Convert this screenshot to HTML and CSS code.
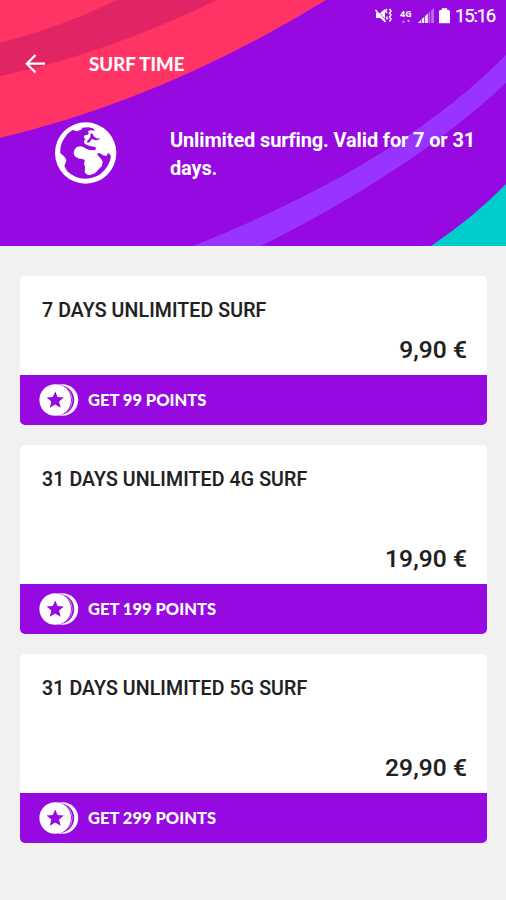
FILE: index.html
```html
<!DOCTYPE html>
<html lang="en">
<head>
<meta charset="utf-8">
<title>Surf Time</title>
<link rel="stylesheet" href="styles.css">
</head>
<body>
<svg class="defs" width="0" height="0" aria-hidden="true">
  <symbol id="coin" viewBox="0 0 40 34">
    <circle cx="23.400" cy="17" r="15.800" fill="#fff"/>
    <circle cx="20.400" cy="17" r="14.800" fill="#9609e0"/>
    <circle cx="18.500" cy="17" r="14.900" fill="#fff"/>
    <circle cx="17.300" cy="17" r="15.600" fill="#9609e0"/>
    <circle cx="16.200" cy="17" r="15.800" fill="#fff"/>
    <path d="M16.200 8.400l2.400 5.700 6.200.5-4.700 4 1.500 6.100-5.400-3.300-5.400 3.300 1.500-6.100-4.700-4 6.200-.5Z" fill="#9609e0"/>
  </symbol>
</svg>
<header class="hero">
  <svg class="hero-art" viewBox="0 0 506 246" aria-hidden="true">
    <path d="M0 0H326Q165 99 0 138Z" fill="#ff3364"/>
    <path d="M0 43Q62 27 117 0H217Q105 54 0 76Z" fill="#e12463"/>
    <path d="M193 246C315 197 425 137 506 55V83C440 145 353 200 261 246Z" fill="#9933ff"/>
    <path d="M431 246Q474 217 506 184V246Z" fill="#00cccc"/>
  </svg>
  <div class="status">
    <svg class="sound" viewBox="0 0 18 18" aria-hidden="true">
      <path d="M2 6h4l5-4v13l-5-4H2Z" fill="#fff"/>
      <path d="M2.500 2l10 12" stroke="#9609e0" stroke-width=".7"/>
      <path d="M1.500 3l10 12M13 2l-1.500 2L13 6M15.500 2L17 4l-1.500 2L17 8l-1.500 2 1.500 2-1.500 2.500M13 9.500v3" fill="none" stroke="#fff" stroke-width="1.500"/>
    </svg>
    <div class="network">
      <span>4G</span>
      <svg viewBox="0 0 10 5" aria-hidden="true"><path d="M1 3.500L2.500 1 4 3.500ZM6 1h3L7.500 3.500Z" fill="#d3a2f3"/></svg>
    </div>
    <svg class="signal" viewBox="0 0 16 16" aria-hidden="true">
      <path d="M0 15l3-3v3ZM3.700 11.300L6.300 8.700V15H3.700ZM7.200 8L9.800 5.500V15H7.200Z" fill="#fff"/>
      <path d="M10.500 4.800l1.700-1.700V15H10.500ZM13.200 2.500L16 0v15h-2.800Z" fill="#bd69ed"/>
    </svg>
    <svg class="battery" viewBox="0 0 12 17" aria-hidden="true"><path d="M3 0h6v2h1.500Q12 2 12 4v11.500q0 1-1 1H1q-1 0-1-1V4q0-2 1.500-2H3Z" fill="#fff"/></svg>
    <span class="clock">15:16</span>
  </div>
  <div class="toolbar">
    <svg class="back" viewBox="0 0 21 20" aria-hidden="true"><path d="M10.500 1L1.800 9.700l8.700 8.800M2 9.700h18" fill="none" stroke="#fff" stroke-width="2.200"/></svg>
    <h1>SURF TIME</h1>
  </div>
  <div class="intro">
    <svg class="globe" viewBox="6 6 189 189" aria-hidden="true">
      <circle cx="101" cy="99" r="92" fill="#fff"/>
      <path d="M108 22L123 25L129 32L116 31L107 34L111 39L106 45L98 46L95 52L100 57L96 64L98 71L106 76L118 79L130 81Q134 88 128 91L113 90L102 86L94 81L85 79L74 81Q65 89 65 100Q67 113 82 116L93 117L99 122L96 130L99 141L98 157Q103 168 117 164L130 159L140 148L150 138L152 124L147 116L137 106Q134 98 142 99L153 106L163 108L168 100Q173 98 174 105L177 108Q173 132 158 150Q136 176 101 176Q68 176 45 153L37 138L43 122L40 114L35 108L25 100Q23 75 36 56Q45 40 61 30L76 34L89 28L91 23Z" fill="#9609e0"/>
      <path d="M116 40L123 42L125 49L135 56L145 53Q141 61 131 61L119 57L114 65L107 69L105 64L112 56L115 51Z" fill="#9609e0"/>
    </svg>
    <p>Unlimited surfing. Valid for 7 or 31<br>days.</p>
  </div>
</header>
<main class="offers">
  <article class="card">
    <div class="details short"><h2>7 DAYS UNLIMITED SURF</h2><div class="price">9,90 €</div></div>
    <div class="points"><svg class="coin"><use href="#coin"/></svg><span class="points-label">GET 99 POINTS</span></div>
  </article>
  <article class="card">
    <div class="details"><h2>31 DAYS UNLIMITED 4G SURF</h2><div class="price">19,90 €</div></div>
    <div class="points"><svg class="coin"><use href="#coin"/></svg><span class="points-label">GET 199 POINTS</span></div>
  </article>
  <article class="card">
    <div class="details"><h2>31 DAYS UNLIMITED 5G SURF</h2><div class="price">29,90 €</div></div>
    <div class="points"><svg class="coin"><use href="#coin"/></svg><span class="points-label">GET 299 POINTS</span></div>
  </article>
</main>
</body>
</html>
```
FILE: styles.css
```css
* { box-sizing: border-box; }
body { margin: 0; min-height: 900px; background: #f1f1f1; font-family: Roboto, sans-serif; color: #202020; }
h1, h2, p { margin: 0; }
svg { display: block; flex: none; }
.defs { position: absolute; }
.hero { position: relative; height: 246px; background: #9609e0; color: #fff; overflow: hidden; }
.hero-art { position: absolute; inset: 0; width: 506px; height: 246px; }
.status, .toolbar, .intro { position: relative; display: flex; }
.status { height: 32px; align-items: center; justify-content: flex-end; padding-right: 10px; }
.sound { width: 18px; height: 18px; }
.network { width: 13px; margin-left: 8px; font: bold 9px/9px "Open Sans", sans-serif; }
.network span { display: block; height: 9px; }
.network svg { width: 10px; height: 5px; margin: 1px 0 0 1px; }
.signal { width: 16px; height: 16px; margin-left: 5px; }
.battery { width: 11px; height: 16px; margin-left: 5px; }
.clock { width: 41px; margin-left: 5px; font-size: 18.5px; line-height: 22px; letter-spacing: -1.2px; white-space: nowrap; -webkit-text-stroke: .25px #fff; }
.toolbar { height: 64px; align-items: center; padding-left: 25px; }
.back { width: 21px; height: 20px; }
h1 { margin-left: 43px; font: bold 18.7px/24px Lato, sans-serif; -webkit-text-stroke: .2px #fff; }
.intro { padding: 26px 0 0 54px; }
.globe { width: 63px; height: 63px; }
.intro p { margin: 4px 0 0 53px; font-weight: 700; font-size: 20px; line-height: 28px; letter-spacing: -.14px; white-space: nowrap; }
.offers { display: flex; flex-direction: column; gap: 20px; padding: 30px 19px 0 20px; }
.card { border-radius: 5px; overflow: hidden; background: #fff; }
.details { height: 139px; padding: 23px 20px 10px 22px; display: flex; flex-direction: column; justify-content: space-between; }
.details.short { height: 99px; }
h2 { font-weight: 500; font-size: 19.5px; line-height: 24px; letter-spacing: .13px; white-space: nowrap; -webkit-text-stroke: .15px #202020; }
.price { align-self: flex-end; font-weight: 500; font-size: 24.5px; line-height: 30px; letter-spacing: .1px; -webkit-text-stroke: .15px #202020; }
.points { display: flex; align-items: center; height: 50px; padding-left: 19px; background: #9609e0; color: #fff; }
.coin { width: 40px; height: 34px; }
.points-label { margin-left: 9px; font: 900 16.5px/22px Lato, sans-serif; white-space: nowrap; }
```
